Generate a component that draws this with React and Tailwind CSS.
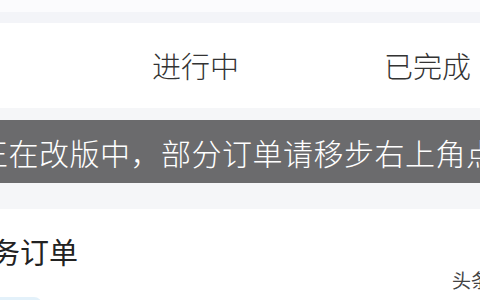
export default function App() {
  return (
    <div
      className="relative w-[480px] h-[300px] overflow-hidden bg-white"
      style={{ fontFamily: '"Noto Sans CJK SC", "Noto Sans", sans-serif' }}
    >
      {/* top strips */}
      <div className="h-[12px] bg-[#fbfbfd]" />
      <div className="h-[11px] bg-[#f3f4f8]" />

      {/* tabs */}
      <div className="h-[85px] bg-white flex items-center pl-[152px] gap-[145px] text-[29px] font-light leading-none text-[#333333] whitespace-nowrap">
        <span>进行中</span>
        <span>已完成</span>
      </div>

      <div className="h-[12px] bg-[#f5f6f8]" />

      {/* notice banner */}
      <div className="h-[63px] bg-[#6b6b6d] flex items-center overflow-hidden">
        <span className="ml-[-22px] whitespace-nowrap text-[30px] font-light leading-none text-white tracking-[0.5px]">
          正在改版中，部分订单请移步右上角点击查看
        </span>
      </div>

      <div className="h-[26px] bg-[#f5f6f8]" />

      {/* section */}
      <div className="bg-white pt-[22px]">
        <div className="ml-[-38px] whitespace-nowrap text-[29px] leading-[40px] text-[#222222]">
          服务订单
        </div>
        <div className="mt-[26px] ml-[-20px] w-[62px] h-[24px] rounded-[8px] bg-[#e3f1fa]" />
      </div>

      {/* watermark */}
      <div className="absolute left-[452px] top-[270px] whitespace-nowrap text-[19px] leading-none text-[#444444]">
        头条号
      </div>
    </div>
  );
}
